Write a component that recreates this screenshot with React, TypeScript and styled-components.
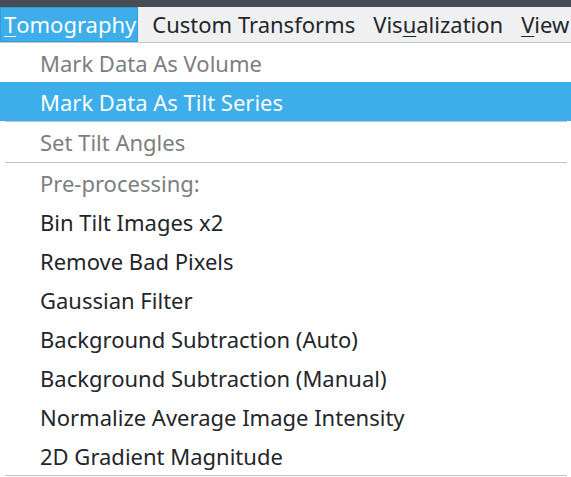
import styled, { createGlobalStyle } from 'styled-components';

const GlobalStyle = createGlobalStyle`
  html, body {
    margin: 0;
    padding: 0;
    background: #ffffff;
    overflow: hidden;
  }
  body {
    font-family: 'Noto Sans', 'DejaVu Sans', sans-serif;
    font-size: 22px;
    color: #232629;
  }
`;

const Window = styled.div`
  width: 571px;
  height: 477px;
  overflow: hidden;
  background: #ffffff;
`;

const TitleStrip = styled.div`
  height: 7px;
  background: #474d55;
`;

const MenuBar = styled.div`
  display: flex;
  height: 35px;
  background: #eff0f1;
  border-bottom: 1px solid #c4c6c8;
  white-space: nowrap;
`;

const BarItem = styled.div<{ $open?: boolean }>`
  display: flex;
  align-items: center;
  padding: 0 1px 1px 3px;
  margin-right: ${(p) => (p.$open ? '10px' : '12px')};
  box-sizing: border-box;
  height: 35px;
  background: ${(p) => (p.$open ? '#3daee9' : 'transparent')};
  border: 1px solid ${(p) => (p.$open ? '#2d9fd8' : 'transparent')};
  color: ${(p) => (p.$open ? '#fcfcfc' : '#232629')};
  line-height: 1;
`;

const Mnemonic = styled.span`
  text-decoration: underline;
  text-underline-offset: 3px;
  text-decoration-thickness: 1px;
`;

const Menu = styled.div`
  width: 576px;
  display: flex;
  flex-direction: column;
`;

const Item = styled.div<{ $active?: boolean; $disabled?: boolean }>`
  height: 39px;
  display: flex;
  align-items: center;
  padding-left: 40px;
  white-space: nowrap;
  background: ${(p) => (p.$active ? '#3daee9' : 'transparent')};
  color: ${(p) => (p.$active ? '#fcfcfc' : p.$disabled ? '#7c7e80' : '#232629')};
`;

const Separator = styled.div`
  height: 1px;
  margin: 0 9px 0 5px;
  background: #c3c4c5;
`;

const tools = [
  'Bin Tilt Images x2',
  'Remove Bad Pixels',
  'Gaussian Filter',
  'Background Subtraction (Auto)',
  'Background Subtraction (Manual)',
  'Normalize Average Image Intensity',
  '2D Gradient Magnitude',
];

export default function App() {
  return (
    <Window>
      <GlobalStyle />
      <TitleStrip />
      <MenuBar>
        <BarItem $open>
          <Mnemonic>T</Mnemonic>omography
        </BarItem>
        <BarItem>Custom Transforms</BarItem>
        <BarItem>
          Vis<Mnemonic>u</Mnemonic>alization
        </BarItem>
        <BarItem>
          <Mnemonic>V</Mnemonic>iew
        </BarItem>
      </MenuBar>
      <Menu>
        <Item $disabled>Mark Data As Volume</Item>
        <Item $active>Mark Data As Tilt Series</Item>
        <Separator />
        <Item $disabled style={{ height: 40 }}>Set Tilt Angles</Item>
        <Separator />
        <Item $disabled>Pre-processing:</Item>
        {tools.map((t) => (
          <Item key={t}>{t}</Item>
        ))}
        <Separator />
      </Menu>
    </Window>
  );
}
